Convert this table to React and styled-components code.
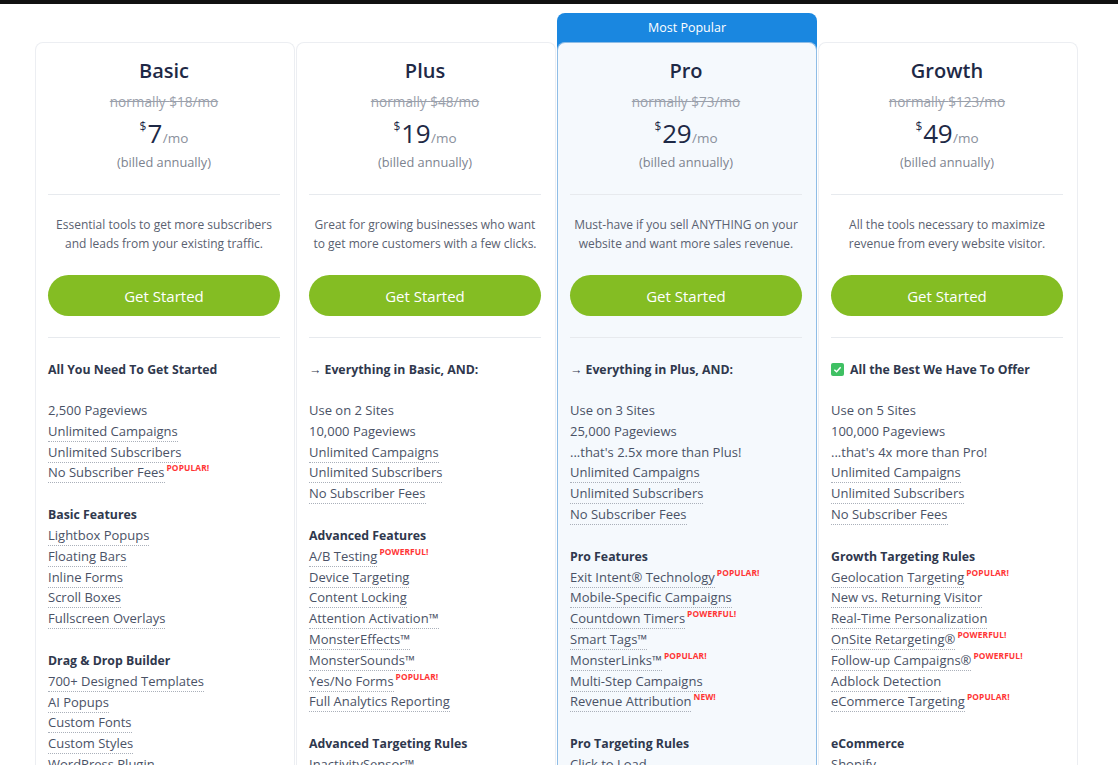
import React from "react";
import styled, { createGlobalStyle } from "styled-components";

const GlobalStyle = createGlobalStyle`
  body {
    margin: 0;
    background: #ffffff;
    font-family: "Open Sans", "Liberation Sans", sans-serif;
    overflow: hidden;
  }
`;

const plans = [
  {
    name: "Basic",
    normally: "$18/mo",
    price: "7",
    desc: ["Essential tools to get more subscribers", "and leads from your existing traffic."],
    lead: "All You Need To Get Started",
    sections: [
      {
        items: [
          { t: "2,500 Pageviews", plain: true },
          { t: "Unlimited Campaigns" },
          { t: "Unlimited Subscribers" },
          { t: "No Subscriber Fees", badge: "POPULAR!" },
        ],
      },
      {
        title: "Basic Features",
        items: [
          { t: "Lightbox Popups" },
          { t: "Floating Bars" },
          { t: "Inline Forms" },
          { t: "Scroll Boxes" },
          { t: "Fullscreen Overlays" },
        ],
      },
      {
        title: "Drag & Drop Builder",
        items: [
          { t: "700+ Designed Templates" },
          { t: "AI Popups" },
          { t: "Custom Fonts" },
          { t: "Custom Styles" },
          { t: "WordPress Plugin" },
        ],
      },
    ],
  },
  {
    name: "Plus",
    normally: "$48/mo",
    price: "19",
    desc: ["Great for growing businesses who want", "to get more customers with a few clicks."],
    lead: "→ Everything in Basic, AND:",
    sections: [
      {
        items: [
          { t: "Use on 2 Sites", plain: true },
          { t: "10,000 Pageviews", plain: true },
          { t: "Unlimited Campaigns" },
          { t: "Unlimited Subscribers" },
          { t: "No Subscriber Fees" },
        ],
      },
      {
        title: "Advanced Features",
        items: [
          { t: "A/B Testing", badge: "POWERFUL!" },
          { t: "Device Targeting" },
          { t: "Content Locking" },
          { t: "Attention Activation™" },
          { t: "MonsterEffects™" },
          { t: "MonsterSounds™" },
          { t: "Yes/No Forms", badge: "POPULAR!" },
          { t: "Full Analytics Reporting" },
        ],
      },
      {
        title: "Advanced Targeting Rules",
        items: [{ t: "InactivitySensor™" }, { t: "Page-Level Targeting" }],
      },
    ],
  },
  {
    name: "Pro",
    popular: true,
    normally: "$73/mo",
    price: "29",
    desc: ["Must-have if you sell ANYTHING on your", "website and want more sales revenue."],
    lead: "→ Everything in Plus, AND:",
    sections: [
      {
        items: [
          { t: "Use on 3 Sites", plain: true },
          { t: "25,000 Pageviews", plain: true },
          { t: "...that's 2.5x more than Plus!", plain: true },
          { t: "Unlimited Campaigns" },
          { t: "Unlimited Subscribers" },
          { t: "No Subscriber Fees" },
        ],
      },
      {
        title: "Pro Features",
        items: [
          { t: "Exit Intent® Technology", badge: "POPULAR!" },
          { t: "Mobile-Specific Campaigns" },
          { t: "Countdown Timers", badge: "POWERFUL!" },
          { t: "Smart Tags™" },
          { t: "MonsterLinks™", badge: "POPULAR!" },
          { t: "Multi-Step Campaigns" },
          { t: "Revenue Attribution", badge: "NEW!" },
        ],
      },
      {
        title: "Pro Targeting Rules",
        items: [{ t: "Click to Load" }, { t: "Scroll Trigger" }],
      },
    ],
  },
  {
    name: "Growth",
    normally: "$123/mo",
    price: "49",
    desc: ["All the tools necessary to maximize", "revenue from every website visitor."],
    lead: "All the Best We Have To Offer",
    check: true,
    sections: [
      {
        items: [
          { t: "Use on 5 Sites", plain: true },
          { t: "100,000 Pageviews", plain: true },
          { t: "...that's 4x more than Pro!", plain: true },
          { t: "Unlimited Campaigns" },
          { t: "Unlimited Subscribers" },
          { t: "No Subscriber Fees" },
        ],
      },
      {
        title: "Growth Targeting Rules",
        items: [
          { t: "Geolocation Targeting", badge: "POPULAR!" },
          { t: "New vs. Returning Visitor" },
          { t: "Real-Time Personalization" },
          { t: "OnSite Retargeting®", badge: "POWERFUL!" },
          { t: "Follow-up Campaigns®", badge: "POWERFUL!" },
          { t: "Adblock Detection" },
          { t: "eCommerce Targeting", badge: "POPULAR!" },
        ],
      },
      {
        title: "eCommerce",
        items: [{ t: "Shopify" }, { t: "WooCommerce" }],
      },
    ],
  },
];

const Page = styled.div`
  min-height: 765px;
`;

const TopBar = styled.div`
  height: 4px;
  background: #111111;
`;

const Plans = styled.div`
  display: grid;
  grid-template-columns: repeat(4, 260px);
  column-gap: 1px;
  padding: 9px 0 0 35px;
  align-items: start;
`;

const Column = styled.div`
  display: flex;
  flex-direction: column;
  border-radius: 8px 8px 0 0;
  background: ${(p) => (p.$popular ? "#1a87e0" : "transparent")};
`;

const Tab = styled.div`
  height: 29px;
  line-height: 29px;
  text-align: center;
  color: #ffffff;
  font-size: 12.5px;
  font-weight: 500;
  visibility: ${(p) => (p.$show ? "visible" : "hidden")};
`;

const Card = styled.div`
  display: flex;
  flex-direction: column;
  height: 760px;
  padding: 15px 14px 0 12px;
  border: 1px solid ${(p) => (p.$popular ? "#8fbde6" : "#eceef2")};
  border-bottom: none;
  border-radius: 8px 8px 0 0;
  background: ${(p) => (p.$popular ? "#f5f9fd" : "#ffffff")};
`;

const Title = styled.h2`
  margin: 0;
  text-align: center;
  font-size: 20px;
  line-height: 26px;
  font-weight: 600;
  color: #1e2946;
`;

const OldPrice = styled.div`
  margin-top: 8px;
  text-align: center;
  font-size: 13.6px;
  line-height: 20px;
  color: #9aa0ab;
  text-decoration: line-through;
`;

const Price = styled.div`
  margin-top: 6px;
  display: flex;
  justify-content: center;
  align-items: baseline;
  line-height: 30px;
  color: #1e2946;
`;

const Dollar = styled.span`
  font-size: 12px;
  align-self: flex-start;
  line-height: 18px;
  margin-right: 1px;
`;

const Amount = styled.span`
  font-size: 26px;
  letter-spacing: -0.5px;
`;

const Per = styled.span`
  font-size: 13.5px;
  color: #8a909c;
  margin-left: 1px;
`;

const Billed = styled.div`
  margin-top: 0;
  text-align: center;
  font-size: 12.8px;
  line-height: 18px;
  color: #7d838f;
`;

const Divider = styled.hr`
  margin: ${(p) => p.$top}px 0 0;
  border: none;
  border-top: 1px solid #e7eaee;
`;

const Desc = styled.p`
  margin: 20px 0 0;
  text-align: center;
  font-size: 12px;
  line-height: 19px;
  color: #5a6170;
`;

const Button = styled.button`
  margin-top: 22px;
  height: 41px;
  border: none;
  border-radius: 21px;
  background: #84bd23;
  color: #ffffff;
  font-family: inherit;
  font-size: 15px;
  cursor: pointer;
`;

const Lead = styled.div`
  margin-top: 21px;
  display: flex;
  align-items: center;
  gap: 6px;
  font-size: 12.3px;
  line-height: 21px;
  font-weight: 700;
  color: #2f384d;
`;

const Check = styled.span`
  width: 13px;
  height: 13px;
  border-radius: 2px;
  background: #3fc063;
  display: inline-flex;
  align-items: center;
  justify-content: center;
`;

const Section = styled.div`
  margin-top: 21px;
  display: flex;
  flex-direction: column;
`;

const SectionTitle = styled.div`
  height: 20.8px;
  font-size: 12.3px;
  line-height: 19px;
  font-weight: 700;
  color: #2f384d;
`;

const Item = styled.div`
  height: 20.8px;
  display: flex;
  align-items: flex-start;
`;

const ItemText = styled.span`
  font-size: 13px;
  line-height: 19px;
  color: #4a5266;
  border-bottom: 1px dotted ${(p) => (p.$plain ? "transparent" : "#aab0ba")};
`;

const Badge = styled.span`
  font-size: 8.4px;
  font-weight: 700;
  color: #ff3535;
  margin-left: 2px;
  line-height: 10px;
  letter-spacing: 0.1px;
`;

function CheckIcon() {
  return (
    <Check>
      <svg width="9" height="9" viewBox="0 0 10 10">
        <path d="M1.5 5.2 L4 7.5 L8.5 2.5" fill="none" stroke="#ffffff" strokeWidth="1.6" />
      </svg>
    </Check>
  );
}

function PlanCard({ plan }) {
  return (
    <Column $popular={plan.popular}>
      <Tab $show={plan.popular}>Most Popular</Tab>
      <Card $popular={plan.popular}>
        <Title>{plan.name}</Title>
        <OldPrice>normally {plan.normally}</OldPrice>
        <Price>
          <Dollar>$</Dollar>
          <Amount>{plan.price}</Amount>
          <Per>/mo</Per>
        </Price>
        <Billed>(billed annually)</Billed>
        <Divider $top={23} />
        <Desc>
          {plan.desc[0]}
          <br />
          {plan.desc[1]}
        </Desc>
        <Button>Get Started</Button>
        <Divider $top={21} />
        <Lead>
          {plan.check && <CheckIcon />}
          {plan.lead}
        </Lead>
        {plan.sections.map((s, i) => (
          <Section key={i}>
            {s.title && <SectionTitle>{s.title}</SectionTitle>}
            {s.items.map((it) => (
              <Item key={it.t}>
                <ItemText $plain={it.plain}>{it.t}</ItemText>
                {it.badge && <Badge>{it.badge}</Badge>}
              </Item>
            ))}
          </Section>
        ))}
      </Card>
    </Column>
  );
}

export default function App() {
  return (
    <Page>
      <GlobalStyle />
      <TopBar />
      <Plans>
        {plans.map((p) => (
          <PlanCard key={p.name} plan={p} />
        ))}
      </Plans>
    </Page>
  );
}
